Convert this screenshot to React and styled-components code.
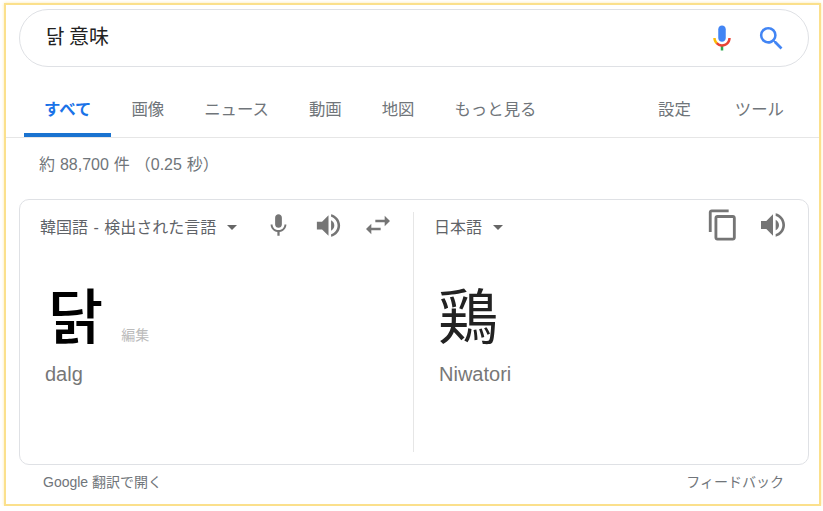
import React from 'react';
import styled, { createGlobalStyle } from 'styled-components';

const GlobalStyle = createGlobalStyle`
  html, body {
    margin: 0;
    padding: 0;
    background: #fff;
    font-family: "Liberation Sans", "Noto Sans CJK JP", sans-serif;
  }
`;

const Frame = styled.div`
  box-sizing: border-box;
  width: 817px;
  height: 503px;
  margin: 3px 0 0 4px;
  border: 2px solid #fbe08c;
  box-shadow: 0 0 3px rgba(251, 224, 140, 0.7);
  background: #fff;
  padding-top: 4px;
`;

const SearchBar = styled.div`
  box-sizing: border-box;
  display: flex;
  align-items: center;
  width: 790px;
  height: 58px;
  margin-left: 13px;
  padding: 0 21px 0 26px;
  border: 1px solid #dfe1e5;
  border-radius: 29px;
`;

const Query = styled.span`
  flex: 1;
  font-family: "Noto Sans CJK JP", sans-serif;
  font-size: 20px;
  line-height: 50px;
  margin-top: -4px;
  color: #222;
`;

const SearchIcons = styled.div`
  display: flex;
  align-items: center;
  gap: 19px;
`;

const Nav = styled.nav`
  display: flex;
  align-items: flex-end;
  height: 70px;
  padding: 0 35px 0 18px;
  border-bottom: 1px solid #e6e6e6;
`;

const Tab = styled.a`
  box-sizing: border-box;
  height: 41px;
  padding: 0 20px;
  font-family: "Noto Sans CJK JP", sans-serif;
  font-size: 16.4px;
  font-weight: ${(p) => (p.$active ? 700 : 400)};
  line-height: 24px;
  color: ${(p) => (p.$active ? '#1a73e8' : '#70757a')};
  border-bottom: 4px solid ${(p) => (p.$active ? '#1a73d0' : 'transparent')};
`;

const NavSpacer = styled.div`
  flex: 1;
`;

const ToolTab = styled(Tab)`
  padding: 0;
  margin-left: 44px;
`;

const Stats = styled.div`
  height: 61px;
  padding: 16px 0 0 33px;
  box-sizing: border-box;
  font-size: 16px;
  word-spacing: 0.5px;
  line-height: 21px;
  color: #70757a;
`;

const Card = styled.div`
  box-sizing: border-box;
  display: flex;
  width: 790px;
  height: 266px;
  margin-left: 13px;
  padding: 12px 0;
  border: 1px solid #dfe1e5;
  border-radius: 10px;
`;

const Panel = styled.div`
  box-sizing: border-box;
  width: ${(p) => p.$width}px;
  padding-left: 20px;
  border-left: ${(p) => (p.$divided ? '1px solid #e6e6e6' : 'none')};
`;

const PanelHeader = styled.div`
  display: flex;
  align-items: center;
  height: 32px;
`;

const LanguageSelect = styled.div`
  display: flex;
  align-items: center;
  font-size: 16px;
  word-spacing: 1px;
  line-height: 32px;
  color: #5f6368;
`;

const Caret = styled.span`
  width: 0;
  height: 0;
  margin: 0 0 2px 11px;
  border-left: 5.5px solid transparent;
  border-right: 5.5px solid transparent;
  border-top: 5px solid #666;
`;

const IconRow = styled.div`
  display: flex;
  align-items: center;
  margin-left: auto;
  margin-right: ${(p) => p.$right}px;
  margin-top: -6px;
  color: #757575;
`;

const IconSlot = styled.div`
  display: flex;
  align-items: center;
  justify-content: center;
  width: 50px;
`;

const Source = styled.div`
  display: flex;
  align-items: flex-end;
  height: 82px;
  margin-top: 28px;
`;

const BigWord = styled.div`
  font-family: "Noto Sans CJK ${(p) => p.$lang}", sans-serif;
  font-size: ${(p) => p.$size}px;
  font-weight: ${(p) => p.$weight};
  line-height: 82px;
  color: ${(p) => p.$color};
  margin-left: ${(p) => p.$offset}px;
`;

const EditLink = styled.span`
  font-family: "Noto Sans CJK JP", sans-serif;
  font-size: 14px;
  line-height: 20px;
  margin: 0 0 10px 18px;
  color: #bbb;
`;

const Reading = styled.div`
  margin: 8px 0 0 5px;
  font-size: 20px;
  line-height: 24px;
  color: #777;
`;

const Footer = styled.div`
  display: flex;
  justify-content: space-between;
  width: 741px;
  margin: 7px 0 0 37px;
  font-size: 14px;
  line-height: 20px;
  color: #70757a;
`;

function GoogleMic() {
    return (<svg width="30" height="30" viewBox="0 0 24 24">
        <path fill="#4285f4" d="m12 15c1.66 0 3-1.31 3-2.97v-7.02c0-1.66-1.34-3.01-3-3.01s-3 1.34-3 3.01v7.02c0 1.66 1.34 2.97 3 2.97z" />
        <path fill="#34a853" d="m11 18.08h2v3.92h-2z" />
        <path fill="#fbbc05" d="m7.05 16.87c-1.27-1.33-2.05-2.83-2.05-4.87h2c0 1.45 0.56 2.42 1.47 3.38v0.32l-1.15 1.18z" />
        <path fill="#ea4335" d="m12 16.93a4.97 5.25 0 0 1 -3.54 -1.55l-1.41 1.49c1.26 1.34 3.02 2.13 4.95 2.13 3.87 0 6.99-2.92 6.99-6.99h-1.99c0 2.92-2.24 4.92-5 4.92z" />
    </svg>
    );
}

function SearchGlyph() {
    return (<svg width="31" height="31" viewBox="0 0 24 24" fill="#4285f4">
        <path d="M15.5 14h-.79l-.28-.27A6.471 6.471 0 0 0 16 9.5 6.5 6.5 0 1 0 9.5 16c1.61 0 3.09-.59 4.23-1.57l.27.28v.79l5 4.99L20.49 19l-4.99-5zm-6 0C7.01 14 5 11.99 5 9.5S7.01 5 9.5 5 14 7.01 14 9.5 11.99 14 9.5 14z" />
    </svg>
    );
}

function Glyph({ size, d }) {
    return (<IconSlot>
        <svg width={size} height={size} viewBox="0 0 24 24" fill="currentColor">
            <path d={d} />
        </svg>
    </IconSlot>
    );
}

const MIC = 'M12 14c1.66 0 2.99-1.34 2.99-3L15 5c0-1.66-1.34-3-3-3S9 3.34 9 5v6c0 1.66 1.34 3 3 3zm5.3-3c0 3-2.54 5.1-5.3 5.1S6.7 14 6.7 11H5c0 3.41 2.72 6.23 6 6.72V21h2v-3.28c3.28-.48 6-3.3 6-6.72h-1.7z';
const VOLUME = 'M3 9v6h4l5 5V4L7 9H3zm13.5 3c0-1.77-1.02-3.29-2.5-4.03v8.05c1.48-.73 2.5-2.25 2.5-4.02zM14 3.23v2.06c2.89.86 5 3.54 5 6.71s-2.11 5.85-5 6.71v2.06c4.01-.91 7-4.49 7-8.77s-2.99-7.86-7-8.77z';
const SWAP = 'M6.99 11L3 15l3.99 4v-3H14v-2H6.99v-3zM21 9l-3.99-4v3H10v2h7.01v3L21 9z';
const COPY = 'M16 1H4c-1.1 0-2 .9-2 2v14h2V3h12V1zm3 4H8c-1.1 0-2 .9-2 2v14c0 1.1.9 2 2 2h11c1.1 0 2-.9 2-2V7c0-1.1-.9-2-2-2zm0 16H8V7h11v14z';

export default function App() {
    return (<>
        <GlobalStyle />
        <Frame>
            <SearchBar>
                <Query>닭 意味</Query>
                <SearchIcons>
                    <GoogleMic />
                    <SearchGlyph />
                </SearchIcons>
            </SearchBar>
            <Nav>
                <Tab $active>すべて</Tab>
                <Tab>画像</Tab>
                <Tab>ニュース</Tab>
                <Tab>動画</Tab>
                <Tab>地図</Tab>
                <Tab>もっと見る</Tab>
                <NavSpacer />
                <ToolTab>設定</ToolTab>
                <ToolTab>ツール</ToolTab>
            </Nav>
            <Stats>約 88,700 件 （0.25 秒）</Stats>
            <Card>
                <Panel $width={393}>
                    <PanelHeader>
                        <LanguageSelect>韓国語 - 検出された言語<Caret /></LanguageSelect>
                        <IconRow $right={10}>
                            <Glyph size={27} d={MIC} />
                            <Glyph size={31} d={VOLUME} />
                            <Glyph size={32} d={SWAP} />
                        </IconRow>
                    </PanelHeader>
                    <Source>
                        <BigWord $lang="KR" $size={60} $weight={500} $color="#000" $offset={8}>닭</BigWord>
                        <EditLink>編集</EditLink>
                    </Source>
                    <Reading>dalg</Reading>
                </Panel>
                <Panel $width={395} $divided>
                    <PanelHeader>
                        <LanguageSelect>日本語<Caret /></LanguageSelect>
                        <IconRow $right={10}>
                            <Glyph size={34} d={COPY} />
                            <Glyph size={32} d={VOLUME} />
                        </IconRow>
                    </PanelHeader>
                    <Source>
                        <BigWord $lang="JP" $size={60} $weight={400} $color="#222" $offset={4}>鶏</BigWord>
                    </Source>
                    <Reading>Niwatori</Reading>
                </Panel>
            </Card>
            <Footer>
                <span>Google 翻訳で開く</span>
                <span>フィードバック</span>
            </Footer>
        </Frame>
    </>
    );
}
